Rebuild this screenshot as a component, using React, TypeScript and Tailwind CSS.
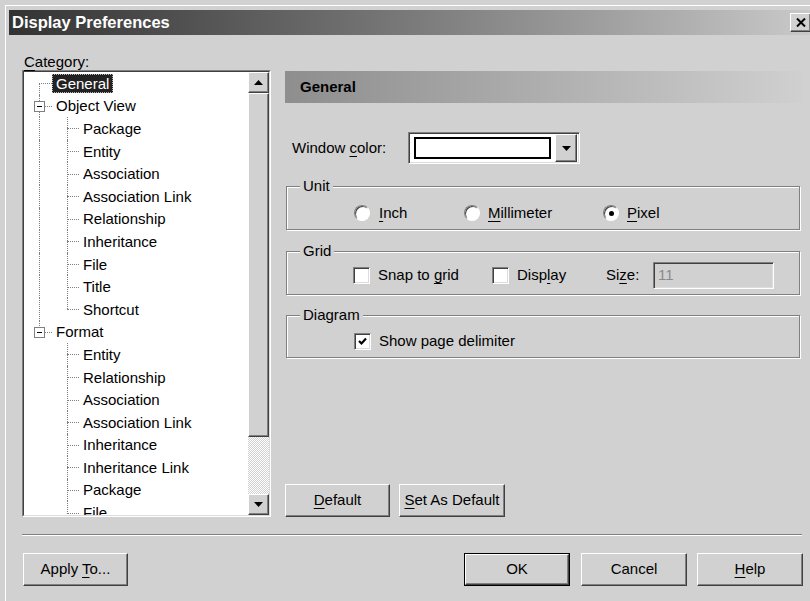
import React from 'react';

type Line = 'none' | 'full' | 'top' | 'bottom';

const raised =
  'bg-[#d1d1d1] border border-t-white border-l-white border-r-[#404040] border-b-[#404040] shadow-[inset_-1px_-1px_#808080]';
const sunken =
  'border border-t-[#808080] border-l-[#808080] border-r-white border-b-white shadow-[inset_1px_1px_#404040,inset_-1px_-1px_#dcdcdc]';

const tree: { label: string; depth: 0 | 1; outer: Line; inner?: Line; box?: boolean; selected?: boolean }[] = [
  { label: 'General', depth: 0, outer: 'bottom', selected: true },
  { label: 'Object View', depth: 0, outer: 'full', box: true },
  { label: 'Package', depth: 1, outer: 'full', inner: 'full' },
  { label: 'Entity', depth: 1, outer: 'full', inner: 'full' },
  { label: 'Association', depth: 1, outer: 'full', inner: 'full' },
  { label: 'Association Link', depth: 1, outer: 'full', inner: 'full' },
  { label: 'Relationship', depth: 1, outer: 'full', inner: 'full' },
  { label: 'Inheritance', depth: 1, outer: 'full', inner: 'full' },
  { label: 'File', depth: 1, outer: 'full', inner: 'full' },
  { label: 'Title', depth: 1, outer: 'full', inner: 'full' },
  { label: 'Shortcut', depth: 1, outer: 'full', inner: 'top' },
  { label: 'Format', depth: 0, outer: 'top', box: true },
  { label: 'Entity', depth: 1, outer: 'none', inner: 'full' },
  { label: 'Relationship', depth: 1, outer: 'none', inner: 'full' },
  { label: 'Association', depth: 1, outer: 'none', inner: 'full' },
  { label: 'Association Link', depth: 1, outer: 'none', inner: 'full' },
  { label: 'Inheritance', depth: 1, outer: 'none', inner: 'full' },
  { label: 'Inheritance Link', depth: 1, outer: 'none', inner: 'full' },
  { label: 'Package', depth: 1, outer: 'none', inner: 'full' },
  { label: 'File', depth: 1, outer: 'none', inner: 'full' },
];

// one indentation column of the tree, with its dotted guide lines
const Guide = ({ line, branch, box, width }: { line: Line; branch?: boolean; box?: boolean; width: string }) => (
  <div className={`relative h-full shrink-0 ${width}`}>
    {line !== 'none' && (
      <div
        className={`absolute left-[15px] border-l border-dotted border-[#808080] ${
          line === 'full' ? 'top-0 bottom-0' : line === 'top' ? 'top-0 h-1/2' : 'top-1/2 bottom-0'
        }`}
      />
    )}
    {branch && <div className="absolute left-[15px] right-0 top-1/2 border-t border-dotted border-[#808080]" />}
    {box && (
      <div className="absolute left-[10px] top-[6px] w-[11px] h-[11px] border border-[#808080] bg-white flex items-center justify-center">
        <div className="w-[5px] h-px bg-black" />
      </div>
    )}
  </div>
);

const Arrow = ({ up }: { up?: boolean }) => (
  <div className={`${raised} w-[21px] h-[21px] flex items-center justify-center shrink-0`}>
    <svg width="9" height="5" viewBox="0 0 9 5">
      <polygon points={up ? '4.5,0 9,5 0,5' : '0,0 9,0 4.5,5'} fill="#000" />
    </svg>
  </div>
);

const Radio = ({ checked }: { checked?: boolean }) => (
  <span className="w-4 h-4 rounded-full bg-white border border-t-[#808080] border-l-[#808080] border-r-white border-b-white shadow-[inset_1px_1px_#404040] flex items-center justify-center shrink-0">
    {checked && <span className="w-[5px] h-[5px] rounded-full bg-black" />}
  </span>
);

const Check = ({ checked }: { checked?: boolean }) => (
  <span className={`${sunken} w-[17px] h-[17px] bg-white flex items-center justify-center shrink-0`}>
    {checked && (
      <svg width="9" height="9" viewBox="0 0 9 9">
        <polyline points="1,4 3.5,6.5 8,1.5" fill="none" stroke="#000" strokeWidth="2.2" />
      </svg>
    )}
  </span>
);

const Group = ({ title, className, children }: { title: string; className: string; children: React.ReactNode }) => (
  <div className={`relative ml-px w-[514px] border border-[#808080] shadow-[inset_1px_1px_#fff,1px_1px_#fff] flex items-center ${className}`}>
    <span className="absolute -top-[9px] left-[13px] px-[3px] bg-[#d1d1d1] leading-[16px]">{title}</span>
    {children}
  </div>
);

const Button = ({ children, width, primary }: { children: React.ReactNode; width: string; primary?: boolean }) =>
  primary ? (
    <div className={`border border-black ${width} h-[33px]`}>
      <div className={`${raised} w-full h-full flex items-center justify-center`}>{children}</div>
    </div>
  ) : (
    <div className={`${raised} ${width} h-[33px] flex items-center justify-center`}>{children}</div>
  );

const U = ({ children }: { children: React.ReactNode }) => (
  <span className="underline underline-offset-[3px]">{children}</span>
);

export default function App() {
  return (
    <div className="w-[810px] h-[601px] overflow-hidden bg-[#d1d1d1] text-black text-[15px] font-['Liberation_Sans',Arial,sans-serif]">
      <div className="ml-[5px] mt-[5px] w-[830px] h-[620px] border-t border-l border-white pl-[3px] pt-[4px]">
        {/* caption */}
        <div className="w-[805px] h-[25px] pl-[3px] pr-[3px] flex items-center justify-between bg-linear-to-r from-[#333333] to-[#cacaca]">
          <span className="text-white font-bold text-[16.5px] leading-none">Display Preferences</span>
          <div className={`${raised} w-[21px] h-[19px] flex items-center justify-center`}>
            <svg width="10" height="9" viewBox="0 0 10 9">
              <path d="M1 0.5 L9 8.5 M9 0.5 L1 8.5" stroke="#000" strokeWidth="2" />
            </svg>
          </div>
        </div>

        <div className="pl-[13px] pt-[19px] w-[794px]">
          <div className="flex w-[781px]">
            {/* category tree */}
            <div className="w-[249px] shrink-0">
              <div className="h-[16px] leading-[16px] pl-[2px]">
                <U>C</U>ategory:
              </div>
              <div className="h-[447px] border border-t-[#808080] border-l-[#808080] border-r-white border-b-white">
                <div className="h-full border border-t-[#404040] border-l-[#404040] border-r-[#dcdcdc] border-b-[#dcdcdc] bg-white flex">
                  <div className="flex-1 overflow-hidden">
                    {tree.map((n, i) => (
                      <div key={i} className="h-[22.6px] flex items-center">
                        <Guide width="w-[28px]" line={n.outer} branch={n.depth === 0} box={n.box} />
                        {n.depth === 1 && <Guide width="w-[27px]" line={n.inner ?? 'none'} branch />}
                        <span
                          className={`px-[3px] h-[19px] leading-[17px] whitespace-nowrap border ${
                            n.selected ? 'bg-[#222222] text-white border-dotted border-[#b8b8b8]' : 'border-transparent'
                          }`}
                        >
                          {n.label}
                        </span>
                      </div>
                    ))}
                  </div>
                  <div className="w-[21px] flex flex-col">
                    <Arrow up />
                    <div className={`${raised} h-[344px] shrink-0`} />
                    <div className="flex-1 bg-[repeating-conic-gradient(#ffffff_0_25%,#d1d1d1_0_50%)] bg-[length:2px_2px]" />
                    <Arrow />
                  </div>
                </div>
              </div>
            </div>

            {/* settings page */}
            <div className="ml-[14px] w-[518px] pt-[17px] flex flex-col">
              <div className="h-[32px] pl-[15px] flex items-center font-bold bg-linear-to-r from-[#8e8e8e] to-[#d0d0d0]">
                General
              </div>

              <div className="mt-[29px] h-[32px] flex items-center pl-[7px]">
                <span className="w-[116px]">
                  {'Window '}
                  <U>c</U>olor:
                </span>
                <div className={`${sunken} w-[172px] h-[32px] bg-white flex items-center pl-[5px] pr-[2px]`}>
                  <div className="w-[137px] h-[22px] border-2 border-black bg-white" />
                  <div className={`${raised} ml-auto w-[22px] h-[28px] flex items-center justify-center`}>
                    <svg width="9" height="5" viewBox="0 0 9 5">
                      <polygon points="0,0 9,0 4.5,5" fill="#000" />
                    </svg>
                  </div>
                </div>
              </div>

              <Group title="Unit" className="mt-[22px] h-[44px] pt-[10px] pl-[67px]">
                <label className="w-[110px] flex items-center gap-[9px]">
                  <Radio />
                  <span>
                    <U>I</U>nch
                  </span>
                </label>
                <label className="w-[139px] flex items-center gap-[8px]">
                  <Radio />
                  <span>
                    <U>M</U>illimeter
                  </span>
                </label>
                <label className="flex items-center gap-[8px]">
                  <Radio checked />
                  <span>
                    <U>P</U>ixel
                  </span>
                </label>
              </Group>

              <Group title="Grid" className="mt-[21px] h-[44px] pt-[4px] pl-[66px]">
                <label className="w-[139px] flex items-center gap-[8px]">
                  <Check />
                  <span>
                    {'Snap to '}
                    <U>g</U>rid
                  </span>
                </label>
                <label className="w-[114px] flex items-center gap-[8px]">
                  <Check />
                  <span>
                    Disp<U>l</U>ay
                  </span>
                </label>
                <span className="w-[47px]">
                  Si<U>z</U>e:
                </span>
                <div className={`${sunken} w-[121px] h-[27px] flex items-center pl-[4px] text-[#8a8a8a]`}>11</div>
              </Group>

              <Group title="Diagram" className="mt-[20px] h-[43px] pt-[9px] pl-[67px]">
                <label className="flex items-center gap-[8px]">
                  <Check checked />
                  <span>Show page delimiter</span>
                </label>
              </Group>

              <div className="mt-auto flex gap-[9px]">
                <Button width="w-[105px]">
                  <U>D</U>efault
                </Button>
                <Button width="w-[106px]">
                  <U>S</U>et As Default
                </Button>
              </div>
            </div>
          </div>

          <div className="mt-[17px] w-[780px] border-t border-[#808080] border-b border-b-white" />

          <div className="mt-[17px] w-[781px] flex items-start">
            <div className="ml-px">
              <Button width="w-[105px]">
                <span className="whitespace-pre">
                  {'Apply '}
                  <U>T</U>o...
                </span>
              </Button>
            </div>
            <div className="ml-auto flex">
              <Button width="w-[106px]" primary>
                OK
              </Button>
              <div className="ml-[11px]">
                <Button width="w-[106px]">Cancel</Button>
              </div>
              <div className="ml-[10px]">
                <Button width="w-[106px]">
                  <U>H</U>elp
                </Button>
              </div>
            </div>
          </div>
        </div>
      </div>
    </div>
  );
}
